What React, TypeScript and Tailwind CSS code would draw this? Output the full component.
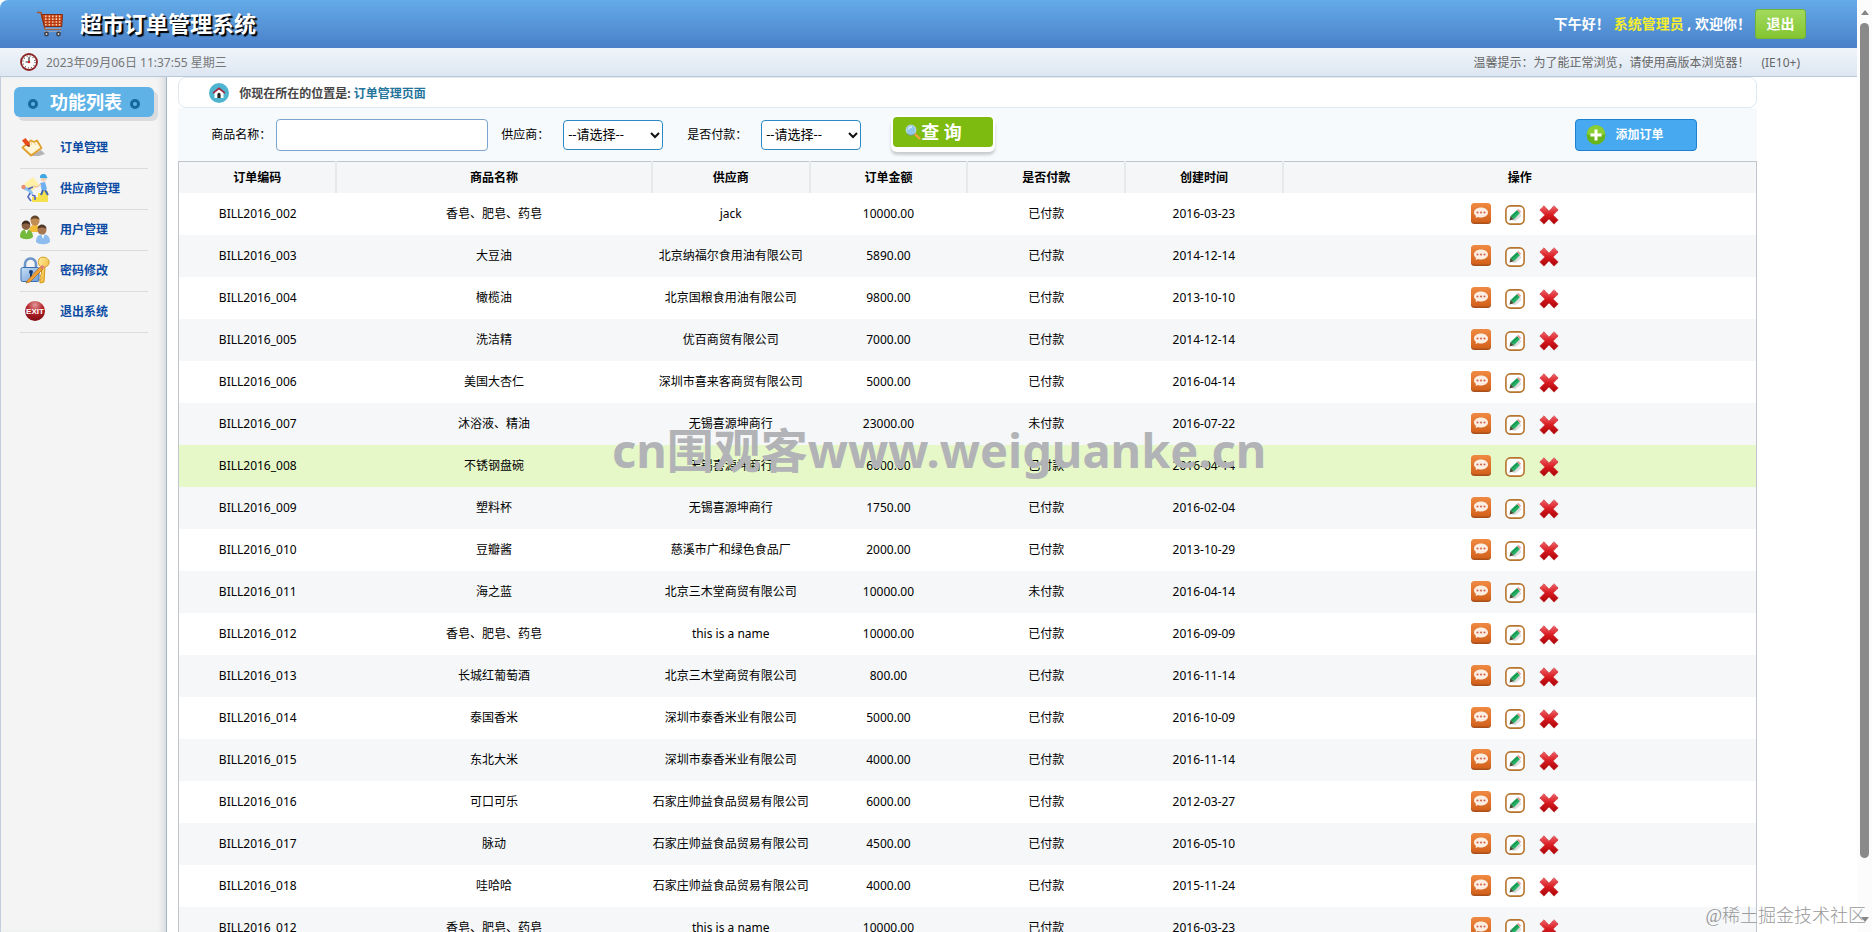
import React from 'react';

type Bill = [code: string, product: string, provider: string, amount: string, paid: string, created: string];

const bills: Bill[] = [
  ['BILL2016_002', '香皂、肥皂、药皂', 'jack', '10000.00', '已付款', '2016-03-23'],
  ['BILL2016_003', '大豆油', '北京纳福尔食用油有限公司', '5890.00', '已付款', '2014-12-14'],
  ['BILL2016_004', '橄榄油', '北京国粮食用油有限公司', '9800.00', '已付款', '2013-10-10'],
  ['BILL2016_005', '洗洁精', '优百商贸有限公司', '7000.00', '已付款', '2014-12-14'],
  ['BILL2016_006', '美国大杏仁', '深圳市喜来客商贸有限公司', '5000.00', '已付款', '2016-04-14'],
  ['BILL2016_007', '沐浴液、精油', '无锡喜源坤商行', '23000.00', '未付款', '2016-07-22'],
  ['BILL2016_008', '不锈钢盘碗', '无锡喜源坤商行', '6000.00', '已付款', '2016-04-14'],
  ['BILL2016_009', '塑料杯', '无锡喜源坤商行', '1750.00', '已付款', '2016-02-04'],
  ['BILL2016_010', '豆瓣酱', '慈溪市广和绿色食品厂', '2000.00', '已付款', '2013-10-29'],
  ['BILL2016_011', '海之蓝', '北京三木堂商贸有限公司', '10000.00', '未付款', '2016-04-14'],
  ['BILL2016_012', '香皂、肥皂、药皂', 'this is a name', '10000.00', '已付款', '2016-09-09'],
  ['BILL2016_013', '长城红葡萄酒', '北京三木堂商贸有限公司', '800.00', '已付款', '2016-11-14'],
  ['BILL2016_014', '泰国香米', '深圳市泰香米业有限公司', '5000.00', '已付款', '2016-10-09'],
  ['BILL2016_015', '东北大米', '深圳市泰香米业有限公司', '4000.00', '已付款', '2016-11-14'],
  ['BILL2016_016', '可口可乐', '石家庄帅益食品贸易有限公司', '6000.00', '已付款', '2012-03-27'],
  ['BILL2016_017', '脉动', '石家庄帅益食品贸易有限公司', '4500.00', '已付款', '2016-05-10'],
  ['BILL2016_018', '哇哈哈', '石家庄帅益食品贸易有限公司', '4000.00', '已付款', '2015-11-24'],
  ['BILL2016_012', '香皂、肥皂、药皂', 'this is a name', '10000.00', '已付款', '2016-03-23'],
];

const columns: [string, string][] = [
  ['订单编码', 'w-[10%]'],
  ['商品名称', 'w-[20%]'],
  ['供应商', 'w-[10%]'],
  ['订单金额', 'w-[10%]'],
  ['是否付款', 'w-[10%]'],
  ['创建时间', 'w-[10%]'],
  ['操作', 'w-[30%]'],
];

function Gradients() {
  return (
    <svg className="absolute size-0" aria-hidden="true">
      <defs>
        <linearGradient id="orange" x1="0" y1="0" x2="0" y2="1">
          <stop offset="0" stopColor="#f08a42" />
          <stop offset="1" stopColor="#d2601b" />
        </linearGradient>
        <linearGradient id="red" x1="0" y1="0" x2="0" y2="1">
          <stop offset="0" stopColor="#f0626a" />
          <stop offset="0.5" stopColor="#d81a1f" />
          <stop offset="1" stopColor="#a80508" />
        </linearGradient>
        <linearGradient id="gold" x1="0" y1="0" x2="1" y2="1">
          <stop offset="0" stopColor="#fff0a0" />
          <stop offset="1" stopColor="#eda91c" />
        </linearGradient>
        <linearGradient id="steel" x1="0" y1="0" x2="1" y2="1">
          <stop offset="0" stopColor="#c9e0f8" />
          <stop offset="1" stopColor="#6d9bd4" />
        </linearGradient>
        <radialGradient id="exit" cx="0.5" cy="0.2" r="0.8">
          <stop offset="0" stopColor="#e29a9a" />
          <stop offset="0.5" stopColor="#b5242a" />
          <stop offset="1" stopColor="#7d0c12" />
        </radialGradient>
      </defs>
    </svg>
  );
}

function CartIcon() {
  return (
    <svg className="h-[26px] w-[28px]" viewBox="0 0 28 26" fill="none">
      <path d="M1 1.5h4l4 16.500h16" stroke="#a8542c" strokeWidth="1.600" />
      <path d="M5.500 3.500H26.500l-.8 12H8.500z" fill="#cf4a1c" stroke="#7e2d14" />
      <path d="M9.800 4.500v10M13.300 4.500v10M16.800 4.500v10M20.300 4.500v10M23.600 4.500v10" stroke="#fbe0b8" strokeWidth="1.300" />
      <path d="M6.500 6.800h19.500M7.200 9.600h18.500M8 12.400h17.500" stroke="#b03a16" strokeWidth="1.100" />
      <path d="M9 17.500h16M8 20.500h17" stroke="#9aa0b0" strokeWidth="1.200" />
      <circle cx="10.500" cy="23" r="2.400" fill="#3c3c44" />
      <circle cx="10.500" cy="23" r="0.900" fill="#ddd" />
      <circle cx="22.500" cy="23" r="2.400" fill="#3c3c44" />
      <circle cx="22.500" cy="23" r="0.900" fill="#ddd" />
    </svg>
  );
}

function ClockIcon() {
  return (
    <svg className="size-[18px]" viewBox="0 0 18 18" fill="none">
      <circle cx="9" cy="9" r="8" fill="#fff" stroke="#8f2222" strokeWidth="1.800" />
      <circle cx="9" cy="9" r="6" stroke="#555" strokeWidth="1.400" strokeDasharray="0.900 2.240" />
      <path d="M9 4v5H5.500" stroke="#333" strokeWidth="1.200" />
      <circle cx="9" cy="9" r="1.300" fill="#c22" />
    </svg>
  );
}

function HomeIcon() {
  return (
    <svg className="size-5" viewBox="0 0 20 20" fill="none">
      <circle cx="10" cy="10" r="10" fill="#4fb4cf" />
      <path d="M5.500 9.500 10 6l4.500 3.500V15h-9z" fill="#fff" />
      <path d="M4 10.200 10 5.300l6 4.900" stroke="#a3283f" strokeWidth="1.700" />
      <path d="M8.400 15v-3.600a1.600 1.600 0 0 1 3.200 0V15z" fill="#222" />
    </svg>
  );
}

function OrderIcon() {
  return (
    <svg className="size-[30px]" viewBox="0 0 30 30" fill="none">
      <path d="M10 23 21 17l4 4-6 2z" fill="#b5b5b5" />
      <path d="M2.500 14.500 11 7.500l3 1.500 3-1.500 4.500 7.500L11 22.500z" fill="#fff6da" stroke="#e0a02c" strokeWidth="1.800" strokeLinejoin="round" />
      <path d="M11 8c1 2 0 3 1 4m2-3 2 3" stroke="#efc98a" />
      <path d="M2 7.500 5.500 5 10 10.500 9.500 14 6 12.500z" fill="#e8491d" />
      <path d="m6 12.500 3.500 1.500-.2-2z" fill="#7a3a18" />
    </svg>
  );
}

function SupplierIcon() {
  return (
    <svg className="size-[30px]" viewBox="0 0 30 30" fill="none">
      <path d="M4 10 13 3l6 8-8 7z" fill="#fff0a6" />
      <path d="M12 28v-5h6v-4h5v-2h5v11z" fill="#f5e04e" />
      <path d="M20 9l5-1 2 7-5 2z" fill="#6faeef" />
      <circle cx="23.500" cy="5" r="2.800" fill="#f7d3b6" />
      <path d="M20 4a3.500 3.500 0 0 1 7-1l.5 1.200z" fill="#3ea7e4" />
      <path d="m21 10-4 3-4-1" stroke="#f3c6a4" strokeWidth="1.400" />
      <path d="m23 16-2 5m4-5 3 5" stroke="#3c63b3" strokeWidth="2" />
      <path d="M4 14l5 2 3 4" stroke="#8dc3f3" strokeWidth="3.400" />
      <circle cx="3.500" cy="13" r="2.200" fill="#e78c72" />
      <path d="m10 19-2 4 3 4m1-6 3 1v4M8 15l5-2" stroke="#5566bd" strokeWidth="1.600" />
    </svg>
  );
}

function UsersIcon() {
  return (
    <svg className="size-[30px]" viewBox="0 0 30 30">
      <path d="M9 17c0-6 3-7 6-7s6 1 6 7z" fill="#f2bb38" />
      <circle cx="15" cy="6" r="4.500" fill="#c28d55" />
      <path d="M10.500 5c0-6 9-6 9 0-2-2-7-2-9 0z" fill="#62452a" />
      <path d="M0 22c0-6 3-7.500 6-7.500s7 1.500 7 7.500c-3 3-10 3-13 0z" fill="#75b93a" />
      <circle cx="6" cy="10.500" r="4.300" fill="#8b6040" />
      <path d="M1.700 10c0-6 8.600-6 8.600 0-2-2-6.600-2-8.600 0z" fill="#402c1e" />
      <path d="M16 27c0-6 3-7.500 7-7.500s7 1.500 7 7.500c-3 3-11 3-14 0z" fill="#8dbdee" />
      <path d="m5 15 1.500 4L8 15zm16.500 5 1.500 4 1.500-4z" fill="#fff" />
      <circle cx="22" cy="15" r="4.500" fill="#a87852" />
      <path d="M17.500 14c0-6 9-6 9 0-2-2-7-2-9 0z" fill="#4f3829" />
    </svg>
  );
}

function PasswordIcon() {
  return (
    <svg className="size-[30px]" viewBox="0 0 30 30" fill="none">
      <path d="M5 12V8a5.500 5.500 0 0 1 11 0v4" stroke="#6b94c8" strokeWidth="2.600" />
      <rect x="1" y="11.500" width="18" height="14" rx="1.500" fill="url(#steel)" stroke="#3c6fb2" />
      <path d="M19 3c3-4 11-1 10 4-.4 2.500-2 3.500-4 4l-1 15-4 1v-4l1.500-1-1.500-2 1.500-2V11c-3-1-4-5-2.500-8z" fill="url(#gold)" stroke="#d69a1d" />
      <circle cx="11" cy="16" r="2" fill="#153a70" />
      <path d="M10 16h2v6h-2z" fill="#153a70" />
      <path d="M7 25 20 11l3 2L10 26l-4 1z" fill="#f0a033" stroke="#a9671c" strokeWidth="0.700" />
      <path d="m20 11 2-2 3 2-2 2z" fill="#e27d7b" />
    </svg>
  );
}

function ExitIcon() {
  return (
    <svg className="size-[30px]" viewBox="0 0 30 30">
      <circle cx="15" cy="14" r="10" fill="url(#exit)" />
      <text x="15" y="17" textAnchor="middle" fontSize="8" fontWeight="700" fill="#fff" fontFamily="Liberation Sans, sans-serif">EXIT</text>
    </svg>
  );
}

function SearchIcon() {
  return (
    <svg className="size-4" viewBox="0 0 16 16" fill="none">
      <path d="m10 10 4.500 4.500" stroke="#f0a23c" strokeWidth="2.400" strokeLinecap="round" />
      <circle cx="6" cy="6" r="4.800" fill="#8fc7ec" stroke="#b9d3dc" strokeWidth="1.200" />
      <path d="M3.500 5.500A3 3 0 0 1 7 3" stroke="#fff" />
      <path d="M2 9.500a5.500 5.500 0 0 0 8 0" stroke="#5c8a9e" strokeWidth="0.900" />
    </svg>
  );
}

function AddIcon() {
  return (
    <svg className="size-5" viewBox="0 0 20 20" fill="none">
      <circle cx="10" cy="10" r="9.500" fill="#69b51d" />
      <path d="M1 9a9 9 0 0 1 18 0c-5 3-13 3-18 0z" fill="#8bcf35" />
      <path d="M10 4.500v11M4.500 10h11" stroke="#fff" strokeWidth="3" />
    </svg>
  );
}

function ViewIcon() {
  return (
    <svg className="h-[22px] w-5" viewBox="0 0 20 22">
      <rect y="1" width="20" height="20" rx="3.500" fill="#a8501c" />
      <rect width="20" height="19.500" rx="3.500" fill="url(#orange)" />
      <path d="M10 4.500c4 0 7 2.200 7 5s-3 5-7 5c-1 0-2-.1-3-.5L4.500 15l.5-2C4 12 3 11 3 9.500c0-2.800 3-5 7-5z" fill="#fdeee4" />
      <circle cx="6.500" cy="9.500" r="1.100" fill="#d46a50" />
      <circle cx="10" cy="9.500" r="1.100" fill="#d46a50" />
      <circle cx="13.500" cy="9.500" r="1.100" fill="#d46a50" />
    </svg>
  );
}

function EditIcon() {
  return (
    <svg className="size-5" viewBox="0 0 20 20">
      <rect x="0.900" y="0.900" width="18.200" height="18.200" rx="4.500" fill="#fff" stroke="#b8742c" strokeWidth="1.600" />
      <path d="M7 15.500 15 8l1.500 3-6 5z" fill="#dcdcdc" />
      <path d="m5.500 11 6.500-6 3 3-6 6.200z" fill="#22b062" />
      <path d="m6.500 12 6.500-6" stroke="#128045" strokeWidth="1" />
      <path d="m12 5 1.200-1.200 3 3L15 8z" fill="#e89a9a" />
      <path d="m5.500 11 3.500 3.200-4.500 1.300z" fill="#4b4a33" />
    </svg>
  );
}

function DeleteIcon() {
  return (
    <svg className="size-5" viewBox="0 0 20 20">
      <path
        d="M5 .8 10 6l5-5.200L19.300 5 14.200 10l5.100 5-4.300 4.200L10 14l-5 5.200L.7 15l5.100-5L.7 5z"
        fill="url(#red)"
        stroke="#c4383c"
        strokeWidth="0.800"
        strokeDasharray="1.500 0.800"
      />
    </svg>
  );
}

const menu: [string, () => React.JSX.Element][] = [
  ['订单管理', OrderIcon],
  ['供应商管理', SupplierIcon],
  ['用户管理', UsersIcon],
  ['密码修改', PasswordIcon],
  ['退出系统', ExitIcon],
];

function Ring() {
  return <span className="mt-1 size-[10px] rounded-full border-3 border-[#15699f] bg-[#5fb2e3]" />;
}

function Sidebar() {
  return (
    <aside className="w-[9%] shrink-0 border-x border-l-[#c3cfda] border-r-[#9fb6cb] bg-[#f4f4f4] pt-[10px] pr-3 pl-[13px] shadow-[inset_-6px_0_6px_-3px_#d5d8dc]">
      <h2 className="flex h-[30px] items-center justify-center gap-2 rounded-md bg-[#5fb2e6] text-lg font-bold text-white shadow-[4px_4px_0_#d9dbde]">
        <Ring />
        <span className="pl-1">功能列表</span>
        <Ring />
      </h2>
      <ul className="mt-[11px] px-[6px]">
        {menu.map(([label, Icon]) => (
          <li key={label} className="border-b border-[#dcdcdc]">
            <a href="#" className="flex h-10 items-center gap-[10px] font-bold text-[#0b4ba3]">
              <Icon />
              {label}
            </a>
          </li>
        ))}
      </ul>
    </aside>
  );
}

function PaneSelect({ id, label }: { id: string; label: string }) {
  return (
    <>
      <label htmlFor={id}>{label}</label>
      <span className="relative ml-[14px] flex">
        <select id={id} className="h-[30px] w-[100px] appearance-none rounded border border-[#2b8ac6] bg-white pl-1 text-[13px]">
          <option>--请选择--</option>
        </select>
        <svg className="pointer-events-none absolute top-3 right-[3px] h-[7px] w-[10px]" viewBox="0 0 10 7" fill="none">
          <path d="m1 1 4 4 4-4" stroke="#111" strokeWidth="2" />
        </svg>
      </span>
    </>
  );
}

function SearchBar() {
  return (
    <form className="flex h-[53px] items-center bg-[#f6fafd] pr-[60px] pl-[33px]">
      <label htmlFor="product">商品名称：</label>
      <input id="product" className="mr-[13px] ml-[5px] h-8 w-[212px] rounded border border-[#7ba4cf] bg-white px-2" />
      <PaneSelect id="provider" label="供应商：" />
      <span className="w-6" />
      <PaneSelect id="paid" label="是否付款：" />
      <button
        type="button"
        className="mb-[6px] ml-8 flex h-[30px] w-[100px] items-center rounded bg-[#7dbb10] pl-3 text-lg font-bold text-white shadow-[0_0_0_2px_#fff,0_3px_0_2px_#fff,0_6px_3px_2px_#c9ccce]"
      >
        <SearchIcon />
        查 询
      </button>
      <a href="#" className="ml-auto flex h-8 w-[122px] items-center gap-[10px] rounded border border-[#1f7fd0] bg-[#47aaf0] pl-[10px] font-bold text-white">
        <AddIcon />
        添加订单
      </a>
    </form>
  );
}

function BillTable() {
  return (
    <table className="w-full table-fixed border-collapse border border-b-0 border-[#bfc5ca] text-center">
      <thead>
        <tr className="h-[31px] bg-[#f4f6f8]">
          {columns.map(([name, width]) => (
            <th key={name} className={`${width} border-r-2 border-[#e6e8ea] px-0 pt-0.5 pb-0 font-bold last:border-r last:border-[#bfc5ca]`}>
              {name}
            </th>
          ))}
        </tr>
      </thead>
      <tbody>
        {bills.map((bill, i) => (
          <tr key={i} className={bill[0] === 'BILL2016_008' ? 'h-[42px] bg-[#e6f8c8]' : 'h-[42px] odd:bg-white even:bg-[#f5f7f9]'}>
            {bill.map((value, j) => (
              <td key={j} className="p-0 whitespace-nowrap">
                {value}
              </td>
            ))}
            <td className="p-0">
              <div className="flex items-end justify-center gap-[14px] pr-2">
                <button type="button" aria-label="查看"><ViewIcon /></button>
                <button type="button" aria-label="修改"><EditIcon /></button>
                <button type="button" aria-label="删除"><DeleteIcon /></button>
              </div>
            </td>
          </tr>
        ))}
      </tbody>
    </table>
  );
}

function ScrollRail() {
  return (
    <div className="flex w-[15px] shrink-0 flex-col items-center justify-between bg-[#fcfcfc] pt-[10px] pb-[10px]">
      <svg className="h-[5px] w-2 shrink-0" viewBox="0 0 8 5"><path d="M4 0 8 5H0z" fill="#858585" /></svg>
      <span className="mt-2 mb-[59px] w-[9px] grow rounded-full bg-[#8a8a8a]" />
      <svg className="h-[5px] w-2 shrink-0" viewBox="0 0 8 5"><path d="M0 0h8L4 5z" fill="#858585" /></svg>
    </div>
  );
}

export default function App() {
  return (
    <div className="relative flex h-screen overflow-hidden bg-white font-['Noto_Sans','Noto_Sans_CJK_SC',sans-serif] text-xs text-black">
      <Gradients />
      <div className="flex min-w-0 grow flex-col">
        <header className="flex h-12 shrink-0 items-center rounded-tl-lg bg-linear-to-b from-[#64abe9] to-[#4a80c8] pr-[51px] pl-[36px] text-white">
          <CartIcon />
          <h1 className="ml-4 text-[22px] font-bold [text-shadow:2px_2px_1px_#000]">超市订单管理系统</h1>
          <div className="ml-auto flex items-center text-sm font-bold">
            <p>
              下午好！<span className="ml-1 text-[#f6ee2c]">系统管理员</span> , 欢迎你！
            </p>
            <a href="#" className="ml-1 flex h-[30px] w-[51px] items-center justify-center rounded-[3px] border border-[#74b534] bg-linear-to-b from-[#a2da5c] to-[#84c52f]">
              退出
            </a>
          </div>
        </header>
        <section className="flex h-[29px] shrink-0 items-center border-b border-[#b9c9d9] bg-linear-to-b from-[#f0f4fa] to-[#dde7f2] pr-[57px] pl-5 text-[#777]">
          <ClockIcon />
          <span className="ml-2 pt-0.5">2023年09月06日 11:37:55 星期三</span>
          <span className="ml-auto pt-0.5 text-[#666]">
            温馨提示：为了能正常浏览，请使用高版本浏览器！<span className="ml-3">(IE10+)</span>
          </span>
        </section>
        <div className="flex min-h-0 grow">
          <Sidebar />
          <main className="ml-[11px] w-[85%] shrink-0">
            <div className="flex h-[31px] items-center rounded-lg border border-[#e1e8ee] bg-white pl-[30px] font-bold text-[#444]">
              <HomeIcon />
              <p className="ml-[10px] pt-0.5">
                你现在所在的位置是: <span className="text-[#23749b]">订单管理页面</span>
              </p>
            </div>
            <SearchBar />
            <BillTable />
          </main>
        </div>
      </div>
      <ScrollRail />
      <div className="pointer-events-none absolute top-[422px] left-[612px] text-[47px] leading-14 font-bold whitespace-nowrap text-[#b2b3b6]">
        cn围观客www.weiguanke.cn
      </div>
      <div className="pointer-events-none absolute right-[6px] bottom-1 font-['Liberation_Serif','Noto_Sans_CJK_SC',serif] text-lg leading-6 font-light whitespace-nowrap text-[#999]">
        @稀土掘金技术社区
      </div>
    </div>
  );
}
